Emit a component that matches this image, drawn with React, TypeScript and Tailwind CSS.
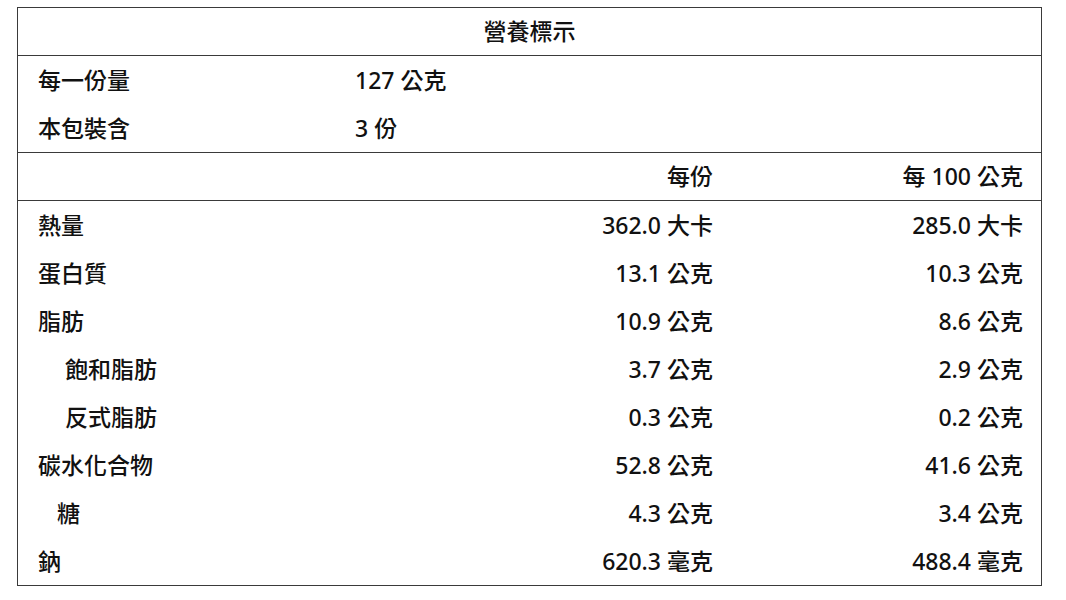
import React from "react";

const rows: { label: string; indent: string; a: string; b: string }[] = [
  { label: "熱量", indent: "pl-[20px]", a: "362.0 大卡", b: "285.0 大卡" },
  { label: "蛋白質", indent: "pl-[20px]", a: "13.1 公克", b: "10.3 公克" },
  { label: "脂肪", indent: "pl-[20px]", a: "10.9 公克", b: "8.6 公克" },
  { label: "飽和脂肪", indent: "pl-[47px]", a: "3.7 公克", b: "2.9 公克" },
  { label: "反式脂肪", indent: "pl-[47px]", a: "0.3 公克", b: "0.2 公克" },
  { label: "碳水化合物", indent: "pl-[20px]", a: "52.8 公克", b: "41.6 公克" },
  { label: "糖", indent: "pl-[39px]", a: "4.3 公克", b: "3.4 公克" },
  { label: "鈉", indent: "pl-[20px]", a: "620.3 毫克", b: "488.4 毫克" },
];

export default function App() {
  return (
    <div className="w-[1066px] h-[600px] bg-white pt-[7px] pl-[17px] text-[#111] text-[23px] font-medium [font-family:'Noto_Sans','Noto_Sans_CJK_TC',sans-serif]">
      <div className="w-[1025px] border border-[#3a3a3a]">
        <div className="h-[48px] flex items-center justify-center border-b border-[#3a3a3a]">
          營養標示
        </div>
        <div className="border-b border-[#3a3a3a]">
          <div className="h-[48px] grid grid-cols-[337px_1fr] items-center">
            <div className="pl-[20px]">每一份量</div>
            <div>127 公克</div>
          </div>
          <div className="h-[48px] grid grid-cols-[337px_1fr] items-center">
            <div className="pl-[20px]">本包裝含</div>
            <div>3 份</div>
          </div>
        </div>
        <div className="h-[48px] grid grid-cols-[1fr_310px_308px] items-center border-b border-[#3a3a3a]">
          <div />
          <div className="text-right pr-[20px]">每份</div>
          <div className="text-right pr-[18px]">每 100 公克</div>
        </div>
        {rows.map((r) => (
          <div key={r.label} className="h-[48px] grid grid-cols-[1fr_310px_308px] items-center">
            <div className={r.indent}>{r.label}</div>
            <div className="text-right pr-[20px]">{r.a}</div>
            <div className="text-right pr-[18px]">{r.b}</div>
          </div>
        ))}
      </div>
    </div>
  );
}
